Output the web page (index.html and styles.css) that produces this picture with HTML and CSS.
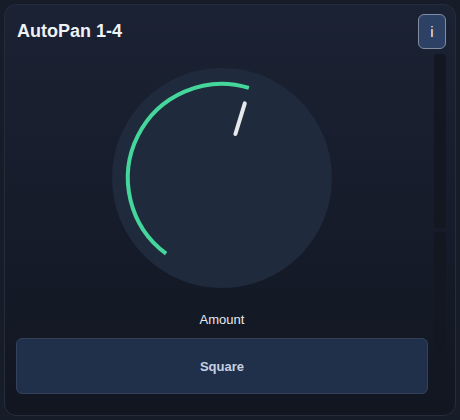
FILE: index.html
```html
<!DOCTYPE html>
<html>
<head>
<meta charset="utf-8">
<link rel="stylesheet" href="styles.css">
</head>
<body>
<div class="card">
  <div class="header">
    <h1 class="title">AutoPan 1-4</h1>
    <button class="info">i</button>
  </div>
  <div class="body">
    <div class="main">
      <div class="knob">
        <svg width="220" height="220" viewBox="0 0 220 220">
          <circle cx="110" cy="110" r="110" fill="#1f2a3c"/>
          <path d="M 54.1 185.6 A 94 94 0 0 1 136.9 19.9" fill="none" stroke="#45d69c" stroke-width="4"/>
          <line x1="123.4" y1="66" x2="132.8" y2="35.4" stroke="#e6e8ec" stroke-width="4" stroke-linecap="round"/>
        </svg>
      </div>
      <div class="label">Amount</div>
      <button class="mode">Square</button>
    </div>
    <div class="meter">
      <div class="seg"></div>
      <div class="seg"></div>
    </div>
  </div>
</div>
</body>
</html>
```

FILE: styles.css
```css
html, body {
  margin: 0;
  padding: 0;
  background: #161c28;
  font-family: "Liberation Sans", Arial, sans-serif;
}
.card {
  box-sizing: border-box;
  margin: 4px;
  width: 452px;
  height: 412px;
  border: 1px solid #252d3d;
  border-radius: 12px;
  background: linear-gradient(180deg, #1b2233 0%, #111621 100%);
  padding: 9px 9px 10px 11px;
  display: flex;
  flex-direction: column;
}
.header {
  display: flex;
  align-items: center;
  justify-content: space-between;
  height: 35px;
}
.title {
  margin: 0 0 0 1px;
  font-size: 18px;
  font-weight: bold;
  color: #eef1f6;
}
.info {
  box-sizing: border-box;
  width: 28px;
  height: 35px;
  padding: 0;
  border: 1px solid #7f8ca2;
  border-radius: 6px;
  background: #2c4163;
  color: #e8ebf0;
  font-family: "Liberation Sans", Arial, sans-serif;
  font-size: 15px;
}
.body {
  flex: 1;
  display: grid;
  grid-template-columns: 1fr 12px;
  column-gap: 6px;
  margin-top: 5px;
}
.main {
  display: flex;
  flex-direction: column;
  align-items: center;
}
.knob {
  margin-top: 14px;
  width: 220px;
  height: 220px;
}
.knob svg { display: block; }
.label {
  margin-top: 24px;
  font-size: 13px;
  line-height: 16px;
  color: #e6e9ee;
}
.mode {
  box-sizing: border-box;
  margin-top: 10px;
  width: 100%;
  height: 56px;
  border: 1px solid #344159;
  border-radius: 6px;
  background: #20304a;
  color: #c6d1e4;
  font-family: "Liberation Sans", Arial, sans-serif;
  font-size: 13px;
  font-weight: bold;
}
.meter {
  display: flex;
  flex-direction: column;
  gap: 4px;
}
.seg {
  flex: 1;
  background: #121722;
  border-radius: 4px;
}
```
